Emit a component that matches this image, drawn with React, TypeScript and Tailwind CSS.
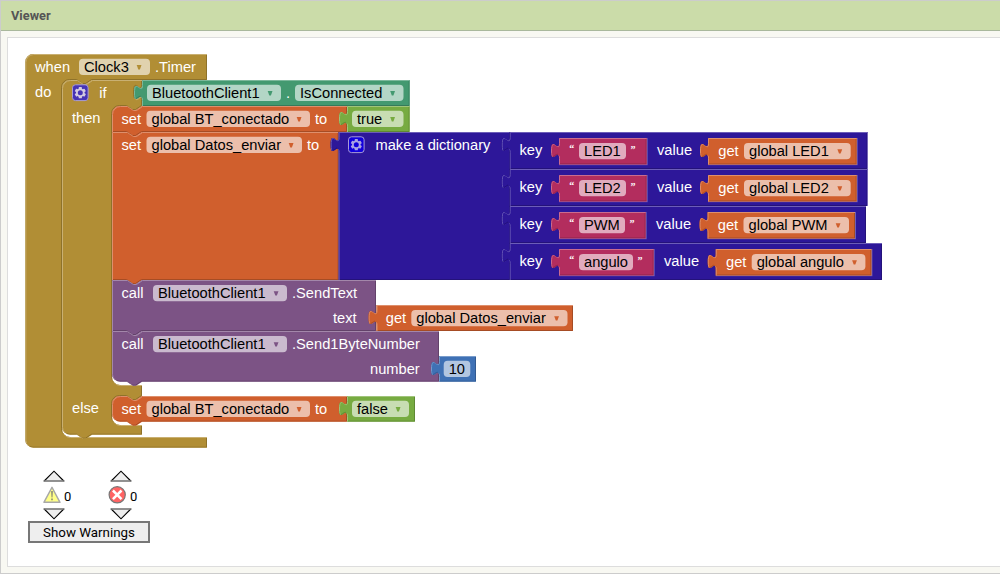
import React from "react";

const NOTCH_R = "l6,4 3,0 6,-4";
const NOTCH_L = "l-6,4 -3,0 -6,-4";
const TAB_UP = "c0,-10 -8,8 -8,-7.5 s8,2.5 8,-7.5";
const TAB_DOWN = "c0,10 -8,-8 -8,7.5 s8,-2.5 8,7.5";

type ShapeProps = { d: string; fill: string; light: string; dark: string };

/** A block body with a lit top-left edge and a shaded bottom-right edge. */
function Shape({ d, fill, light, dark }: ShapeProps) {
  const id = React.useId();
  return (
    <g>
      <clipPath id={id}>
        <path d={d} />
      </clipPath>
      <path d={d} className={fill} />
      <g clipPath={`url(#${id})`} fill="none" strokeWidth={1}>
        <path d={d} className={dark} transform="translate(-0.5 -0.5)" />
        <path d={d} className={light} transform="translate(0.5 0.5)" />
      </g>
    </g>
  );
}

const tones = {
  gold: { fill: "fill-[#b18e35]", light: "stroke-[#c9b072]", dark: "stroke-[#8e722a]" },
  teal: { fill: "fill-[#439970]", light: "stroke-[#7bb89b]", dark: "stroke-[#367a5a]" },
  orange: { fill: "fill-[#d05f2d]", light: "stroke-[#de8f6c]", dark: "stroke-[#a64c24]" },
  green: { fill: "fill-[#77ab41]", light: "stroke-[#a0c47a]", dark: "stroke-[#5f8934]" },
  navy: { fill: "fill-[#2d1799]", light: "stroke-[#6c5db8]", dark: "stroke-[#24127a]" },
  purple: { fill: "fill-[#7c5385]", light: "stroke-[#a387aa]", dark: "stroke-[#63426a]" },
  pink: { fill: "fill-[#b32d5e]", light: "stroke-[#ca6c8e]", dark: "stroke-[#8f244b]" },
  blue: { fill: "fill-[#3f71b5]", light: "stroke-[#799ccb]", dark: "stroke-[#325a91]" },
};
type Tone = keyof typeof tones;

/** Value block: a rectangle with an output tab on its left side. */
function Value({ x, y, r, b, tone }: { x: number; y: number; r: number; b: number; tone: Tone }) {
  return <Shape d={`M${x},${y} H${r} V${b} H${x} V${y + 20} ${TAB_UP} Z`} {...tones[tone]} />;
}

/** Statement block; `top` and `bottom` round its left corners. */
function Statement({
  x, y, r, b, tone, top, bottom,
}: { x: number; y: number; r: number; b: number; tone: Tone; top?: boolean; bottom?: boolean }) {
  const start = top ? `M${x},${y + 8} a8,8 0 0 1 8,-8` : `M${x},${y}`;
  const end = bottom ? `H${x + 8} a8,8 0 0 1 -8,-8` : `H${x}`;
  return (
    <Shape
      d={`${start} H${x + 15} ${NOTCH_R} H${r} V${b} H${x + 30} ${NOTCH_L} ${end} Z`}
      {...tones[tone]}
    />
  );
}

function Label({ x, y, children }: { x: number; y: number; children: string }) {
  return (
    <text x={x} y={y} className="fill-white">
      {children}
    </text>
  );
}

function Field({
  x, r, y, tone, children,
}: { x: number; r: number; y: number; tone?: Tone; children: string }) {
  return (
    <g>
      <rect x={x} y={y} width={r - x} height={16.3} rx={4} className="fill-white/60" />
      <text x={x + 5} y={y + 13} className="fill-black">
        {children}
      </text>
      {tone && <path d={`M${r - 13.3},${y + 6.2} h4.8 l-1.6,4.4 h-1.6 z`} className={tones[tone].fill} />}
    </g>
  );
}

function Gear({ x, y, fill, ink }: { x: number; y: number; fill: string; ink: string }) {
  return (
    <g transform={`translate(${x} ${y})`}>
      <rect x={0.5} y={0.5} width={15.6} height={15.8} rx={3} className={`${fill} stroke-[#a79bd6]`} />
      <g transform="translate(8.3 8.4)">
        {[0, 60, 120].map((a) => (
          <rect key={a} x={-1.6} y={-5.6} width={3.2} height={11.2} rx={0.6} transform={`rotate(${a})`} className={ink} />
        ))}
        <circle r={4.3} className={ink} />
        <circle r={2.5} className={fill} />
      </g>
    </g>
  );
}

const pairs = [
  { y: 132, r: 867.5, key: "LED1", kr: 647, fr: 626, value: 657, gx: 708, gr: 857 },
  { y: 169, r: 867.5, key: "LED2", kr: 647, fr: 626, value: 657, gx: 708, gr: 857 },
  { y: 206, r: 866, key: "PWM", kr: 646, fr: 625, value: 656, gx: 707.5, gr: 855.3 },
  { y: 243, r: 882, key: "angulo", kr: 654, fr: 633, value: 664, gx: 715.7, gr: 871.7 },
];

const QUOTE = "fill-white text-[10px] font-bold [font-family:'Liberation_Serif',serif]";

function Blocks() {
  return (
    <svg
      width={900}
      height={460}
      className="absolute left-0 top-0 text-[14.667px] [font-family:'Liberation_Sans',Arial,sans-serif]"
    >
      <Shape
        d={`M25.3,62 a8,8 0 0 1 8,-8 H207 V80 H92 ${NOTCH_L} H70 a8,8 0 0 0 -8,8 V429 a8,8 0 0 0 8,8 H207 V447.7 H33.3 a8,8 0 0 1 -8,-8 Z`}
        {...tones.gold}
      />
      <Shape
        d={`M62,88 a8,8 0 0 1 8,-8 H77 ${NOTCH_R} H142 V85 ${TAB_DOWN} V106 ${NOTCH_L} H120 a8,8 0 0 0 -8,8 V377 a8,8 0 0 0 8,8 H142 V396 ${NOTCH_L} H120 a8,8 0 0 0 -8,8 V417 a8,8 0 0 0 8,8 H142 V434.7 H92 ${NOTCH_L} H70 a8,8 0 0 1 -8,-8 Z`}
        {...tones.gold}
      />
      <Value x={142} y={80} r={409.7} b={106} tone="teal" />
      <Statement x={112} y={106} r={347} b={132} tone="orange" top />
      <Value x={347} y={106} r={409.7} b={132} tone="green" />
      <Statement x={112} y={132} r={338.6} b={280} tone="orange" />
      <Value x={338.6} y={132} r={510} b={280} tone="navy" />
      <Statement x={112} y={280} r={376} b={331} tone="purple" />
      <Value x={376.5} y={305} r={573} b={331} tone="orange" />
      <Statement x={112} y={331} r={439} b={381.7} tone="purple" bottom />
      <Value x={439} y={356} r={476} b={381.7} tone="blue" />
      <Statement x={112} y={396} r={347} b={421.7} tone="orange" top bottom />
      <Value x={347} y={396} r={415} b={421.7} tone="green" />

      <Label x={35} y={72}>when</Label>
      <Field x={79} r={150} y={58.8} tone="gold">Clock3</Field>
      <Label x={155} y={72}>.Timer</Label>
      <Label x={35} y={97}>do</Label>
      <Gear x={72} y={84.3} fill="fill-[#4533b5]" ink="fill-[#d3cbe0]" />
      <Label x={99.3} y={98}>if</Label>
      <Field x={147} r={281} y={84.8} tone="teal">BluetoothClient1</Field>
      <Label x={286} y={98}>.</Label>
      <Field x={295} r={403.5} y={84.8} tone="teal">IsConnected</Field>
      <Label x={72} y={123}>then</Label>
      <Label x={121.5} y={124}>set</Label>
      <Field x={146.5} r={310} y={110.8} tone="orange">global BT_conectado</Field>
      <Label x={315} y={124}>to</Label>
      <Field x={352} r={403.5} y={110.8} tone="green">true</Field>
      <Label x={121.5} y={150}>set</Label>
      <Field x={146.5} r={302} y={136.8} tone="orange">global Datos_enviar</Field>
      <Label x={307} y={150}>to</Label>
      <Gear x={348} y={136.3} fill="fill-[#1200dc]" ink="fill-[#a9a2e2]" />
      <Label x={375.5} y={150}>make a dictionary</Label>

      {pairs.map((p) => (
        <g key={p.key}>
          <Value x={509.6} y={p.y} r={p.r} b={p.y + 37} tone="navy" />
          <Label x={519.5} y={p.y + 23}>key</Label>
          <rect x={559} y={p.y + 6} width={p.kr + 0.7 - 559} height={27.2} className="fill-[#6c5db8]" />
          <Value x={559} y={p.y + 6} r={p.kr - 0.3} b={p.y + 32.5} tone="pink" />
          <text x={569.3} y={p.y + 20.3} className={QUOTE}>“</text>
          <Field x={579} r={p.fr} y={p.y + 11}>{p.key}</Field>
          <text x={p.fr + 4.5} y={p.y + 21.3} className={QUOTE}>”</text>
          <Label x={p.value} y={p.y + 23}>value</Label>
          <rect x={p.gx} y={p.y + 6} width={p.gr + 0.7 - p.gx} height={27.2} className="fill-[#6c5db8]" />
          <Value x={p.gx} y={p.y + 6} r={p.gr - 0.3} b={p.y + 32.5} tone="orange" />
          <Label x={p.gx + 10.3} y={p.y + 24}>get</Label>
          <Field x={p.gx + 36} r={p.gr - 6.3} y={p.y + 11} tone="orange">{`global ${p.key}`}</Field>
        </g>
      ))}

      <Label x={121.5} y={298}>call</Label>
      <Field x={153} r={287} y={285} tone="purple">BluetoothClient1</Field>
      <Label x={292} y={298}>.SendText</Label>
      <Label x={333} y={323}>text</Label>
      <Label x={385.8} y={323}>get</Label>
      <Field x={411.3} r={567.5} y={310} tone="orange">global Datos_enviar</Field>
      <Label x={121.5} y={349}>call</Label>
      <Field x={153} r={287} y={336} tone="purple">BluetoothClient1</Field>
      <Label x={292} y={349}>.Send1ByteNumber</Label>
      <Label x={370} y={374}>number</Label>
      <Field x={443.7} r={470.3} y={360.8}>10</Field>
      <Label x={72} y={413}>else</Label>
      <Label x={121.5} y={414}>set</Label>
      <Field x={146.5} r={310} y={400.8} tone="orange">global BT_conectado</Field>
      <Label x={315} y={414}>to</Label>
      <Field x={352} r={409} y={400.8} tone="green">false</Field>
    </svg>
  );
}

function Chevron({ down }: { down?: boolean }) {
  return (
    <svg width={22} height={12} className={down ? "block rotate-180" : "block"}>
      <path d="M1.2,11 L11,1.2 L20.8,11" className="fill-[#eeeeee] stroke-black" strokeWidth={1.1} />
      <path d="M0.5,11 H21.5" className="stroke-[#777777]" strokeWidth={1.6} />
    </svg>
  );
}

function Counter({ icon }: { icon: React.ReactNode }) {
  return (
    <div className="flex w-[30px] flex-col">
      <div className="pl-px"><Chevron /></div>
      <div className="flex h-[26px] items-center gap-[3px]">
        {icon}
        <span className="pt-[3px] text-[13px] leading-none">0</span>
      </div>
      <div className="pl-px"><Chevron down /></div>
    </div>
  );
}

function WarningIndicator() {
  return (
    <div className="absolute left-[28px] top-[470px] w-[122px] text-black [font-family:Roboto,sans-serif]">
      <div className="flex gap-[37px] pl-[14px]">
        <Counter
          icon={
            <svg width={19} height={18} className="shrink-0">
              <path d="M10,1.3 L18,16.3 H1.9 Z" strokeLinejoin="round" strokeWidth={1.4} className="fill-[#ffff88] stroke-[#a8a8a8]" />
              <path d="M8.9,5 h2.2 l-0.5,6.6 h-1.2 z M9,12.5 h2 v1.8 h-2 z" className="fill-[#a0a07a]" />
            </svg>
          }
        />
        <Counter
          icon={
            <svg width={19} height={18} className="-ml-px shrink-0">
              <circle cx={9.2} cy={8.8} r={8.1} strokeWidth={1.2} className="fill-[#ff6464] stroke-[#777777]" />
              <path d="M4.9,4.5 L13.5,13.1 M13.5,4.5 L4.9,13.1" strokeWidth={2.5} className="stroke-white" />
            </svg>
          }
        />
      </div>
      <button className="mt-px block h-[22px] w-[122px] whitespace-nowrap border-2 border-[#777777] bg-[#eeeeee] p-0 text-center text-[13.33px] leading-[19px]">
        Show Warnings
      </button>
    </div>
  );
}

export default function App() {
  return (
    <div className="relative flex h-[574px] w-[1000px] flex-col overflow-hidden border-y border-l border-[#cccccc] bg-[#f8f8f2]">
      <header className="flex h-[30px] shrink-0 items-center border-b border-[#a9b89c] bg-[#cbdca9] pl-[10px] text-[12.8px] font-bold text-[#555555] [font-family:Roboto,sans-serif]">
        Viewer
      </header>
      <main className="ml-[6px] mt-[6px] h-[530px] border-y border-l border-[#dddddd] bg-white" />
      <div className="absolute -left-px -top-px">
        <Blocks />
        <WarningIndicator />
      </div>
    </div>
  );
}
